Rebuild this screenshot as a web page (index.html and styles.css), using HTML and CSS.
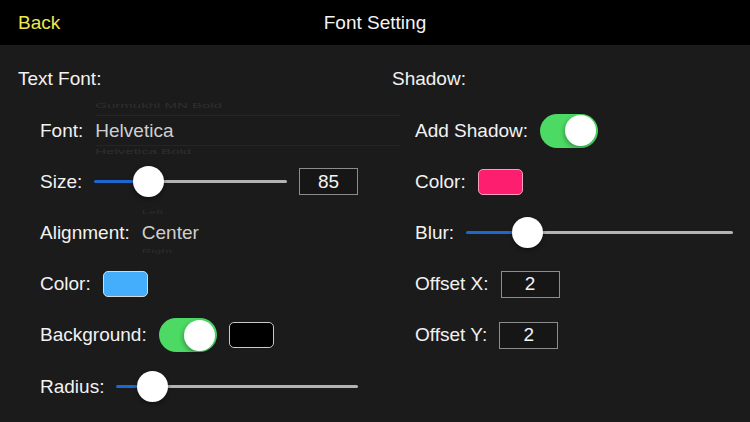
FILE: index.html
```html
<!DOCTYPE html>
<html lang="en">
<head>
    <meta charset="UTF-8">
    <meta name="viewport" content="width=device-width, initial-scale=1.0">
    <title>Font Setting</title>
    <link rel="stylesheet" href="styles.css">
</head>
<body>

    <!-- Navigation Bar -->
    <header class="navbar">
        <a href="#" class="back">Back</a>
        <div class="title">Font Setting</div>
        <div class="spacer"></div>
    </header>

    <!-- Settings -->
    <div class="settings">

        <!-- Text Font column -->
        <div class="column left">
            <div class="section-title">Text Font:</div>

            <div class="row">
                <span class="label">Font:</span>
                <div class="picker font-picker">
                    <div class="ghost ghost-top">Gurmukhi MN Bold</div>
                    <div class="picked">Helvetica</div>
                    <div class="ghost ghost-bottom">Helvetica Bold</div>
                </div>
            </div>

            <div class="row">
                <span class="label">Size:</span>
                <div class="slider">
                    <div class="fill" style="width: 40px"></div>
                    <div class="thumb"></div>
                    <div class="rest"></div>
                </div>
                <div class="number">85</div>
            </div>

            <div class="row">
                <span class="label">Alignment:</span>
                <div class="picker align-picker">
                    <div class="ghost ghost-top">Left</div>
                    <div class="picked">Center</div>
                    <div class="ghost ghost-bottom">Right</div>
                </div>
            </div>

            <div class="row">
                <span class="label">Color:</span>
                <div class="swatch blue"></div>
            </div>

            <div class="row">
                <span class="label">Background:</span>
                <div class="toggle on"><div class="knob"></div></div>
                <div class="swatch black"></div>
            </div>

            <div class="row">
                <span class="label">Radius:</span>
                <div class="slider">
                    <div class="fill" style="width: 22px"></div>
                    <div class="thumb"></div>
                    <div class="rest"></div>
                </div>
            </div>
        </div>

        <!-- Shadow column -->
        <div class="column right">
            <div class="section-title">Shadow:</div>

            <div class="row">
                <span class="label">Add Shadow:</span>
                <div class="toggle on"><div class="knob"></div></div>
            </div>

            <div class="row">
                <span class="label">Color:</span>
                <div class="swatch pink"></div>
            </div>

            <div class="row">
                <span class="label">Blur:</span>
                <div class="slider">
                    <div class="fill" style="width: 47px"></div>
                    <div class="thumb"></div>
                    <div class="rest"></div>
                </div>
            </div>

            <div class="row">
                <span class="label">Offset X:</span>
                <div class="number">2</div>
            </div>

            <div class="row">
                <span class="label">Offset Y:</span>
                <div class="number">2</div>
            </div>
        </div>

    </div>

</body>
</html>
```

FILE: styles.css
```css
/* General */
html, body {
    margin: 0;
    padding: 0;
    height: 100%;
    background-color: #1b1b1b;
    color: #f2f2f2;
    font-family: 'Liberation Sans', Arial, sans-serif;
    overflow: hidden;
}

/* Navigation Bar */
.navbar {
    height: 45px;
    background-color: #000;
    display: flex;
    align-items: center;
    justify-content: space-between;
    padding: 0 18px;
    font-size: 19px;
}

.navbar .back {
    color: #ece84a;
    text-decoration: none;
    width: 80px;
}

.navbar .title {
    color: #f4f4f4;
}

.navbar .spacer {
    width: 80px;
}

/* Settings Layout */
.settings {
    display: grid;
    grid-template-columns: 374px 1fr;
    padding: 8px 17px 0 18px;
}

.section-title {
    height: 52px;
    display: flex;
    align-items: center;
    font-size: 19px;
}

.row {
    height: 51.2px;
    display: flex;
    align-items: center;
    gap: 12px;
    font-size: 19px;
}

.left .row {
    padding: 0 34px 0 22px;
}

.right .row {
    padding-left: 23px;
}

.label {
    white-space: nowrap;
}

/* Picker wheels */
.picker {
    position: relative;
    color: #cfcfcf;
    flex: 1;
    line-height: 21px;
}

.font-picker::before,
.font-picker::after {
    content: "";
    position: absolute;
    left: 0;
    right: -42px;
    height: 1px;
    background-color: #252525;
}

.font-picker::before {
    top: -5px;
}

.font-picker::after {
    bottom: -5px;
}

.ghost {
    position: absolute;
    left: 0;
    font-size: 15px;
    line-height: 12px;
    color: #2f2f2f;
    white-space: nowrap;
    transform: scaleY(0.45);
}

.ghost-top {
    top: -20px;
}

.ghost-bottom {
    bottom: -17px;
}

.align-picker .ghost {
    font-size: 13px;
    line-height: 10px;
    color: #2c2c2c;
}

.align-picker .ghost-top {
    top: -15px;
}

.align-picker .ghost-bottom {
    bottom: -13px;
}

/* Sliders */
.slider {
    flex: 1;
    display: flex;
    align-items: center;
    height: 32px;
}

.slider .fill {
    height: 3px;
    background-color: #1e66d0;
    border-radius: 2px 0 0 2px;
}

.slider .thumb {
    width: 31px;
    height: 31px;
    border-radius: 50%;
    background-color: #fff;
    box-shadow: 0 2px 4px rgba(0, 0, 0, 0.4);
    flex-shrink: 0;
    margin: 0 -1px;
    z-index: 1;
}

.slider .rest {
    flex: 1;
    height: 3px;
    background-color: #b3b3b3;
    border-radius: 0 2px 2px 0;
}

/* Number boxes */
.number {
    width: 57px;
    height: 25px;
    border: 1px solid #8c8c8c;
    background-color: #161616;
    display: flex;
    align-items: center;
    justify-content: center;
    font-size: 19px;
    color: #f4f4f4;
    flex-shrink: 0;
}

/* Colour swatches */
.swatch {
    width: 43px;
    height: 24px;
    border-radius: 5px;
    border: 1px solid #d8d8d8;
    flex-shrink: 0;
}

.swatch.blue {
    background-color: #45aefc;
}

.swatch.black {
    background-color: #000;
    border-color: #c8c8c8;
}

.swatch.pink {
    background-color: #fd1e6f;
    border-color: #f6a0c0;
}

/* Toggle switches */
.toggle {
    width: 58px;
    height: 34px;
    border-radius: 17px;
    background-color: #4cd964;
    display: flex;
    align-items: center;
    justify-content: flex-end;
    padding: 0 2px;
    box-sizing: border-box;
    flex-shrink: 0;
}

.toggle .knob {
    width: 31px;
    height: 31px;
    border-radius: 50%;
    background-color: #fff;
    box-shadow: -1px 2px 4px rgba(0, 0, 0, 0.3);
}
```
